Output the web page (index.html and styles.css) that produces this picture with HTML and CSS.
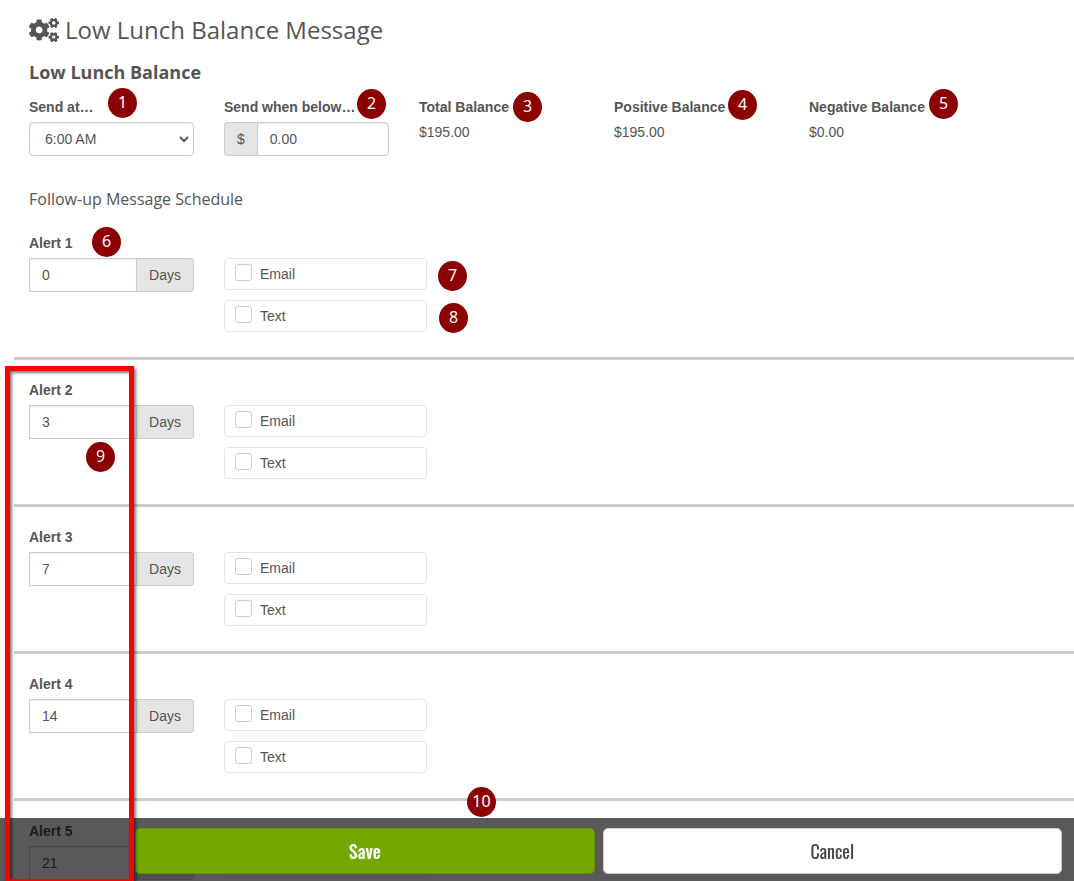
FILE: index.html
```html
<!DOCTYPE html>
<html lang="en">
<head>
<meta charset="utf-8">
<title>Low Lunch Balance Message</title>
<link rel="stylesheet" href="styles.css">
</head>
<body>
<main class="page">
  <header class="intro">
    <h1 class="title">
      <svg class="title-icon" viewBox="0 0 640 512" fill="currentColor" aria-hidden="true">
        <path id="small-gear" d="M512.1 191l-8.2 14.3c-3 5.3-9.4 7.5-15.1 5.4-11.8-4.4-22.6-10.7-32.1-18.6-4.6-3.8-5.8-10.5-2.8-15.7l8.2-14.3c-6.9-8-12.3-17.3-15.9-27.4h-16.5c-6 0-11.2-4.3-12.2-10.3-2-12-2.1-24.6 0-37.1 1-6 6.2-10.4 12.2-10.4h16.5c3.6-10.1 9-19.4 15.9-27.4l-8.2-14.3c-3-5.2-1.900-11.9 2.8-15.7 9.5-7.9 20.4-14.2 32.1-18.6 5.7-2.1 12.1.1 15.1 5.4l8.2 14.3c10.5-1.9 21.2-1.9 31.7 0l8.2-14.3c3-5.300 9.400-7.500 15.100-5.400 11.800 4.400 22.600 10.700 32.100 18.600 4.600 3.800 5.800 10.500 2.800 15.700l-8.200 14.300c6.900 8 12.300 17.300 15.900 27.400h16.500c6 0 11.200 4.300 12.200 10.300 2 12 2.100 24.600 0 37.100-1 6-6.200 10.400-12.200 10.400h-16.500c-3.600 10.100-9 19.400-15.900 27.400l8.200 14.300c3 5.200 1.900 11.900-2.800 15.700-9.500 7.900-20.400 14.200-32.100 18.600-5.700 2.100-12.100-.1-15.100-5.400l-8.200-14.300c-10.400 1.900-21.200 1.900-31.700 0zm-10.500-58.800c38.500 29.600 82.400-14.300 52.800-52.800-38.500-29.700-82.400 14.300-52.800 52.800z"/>
        <use href="#small-gear" y="302"/>
        <path d="M386.3 286.1l33.7 16.8c10.1 5.8 14.5 18.1 10.5 29.1-8.9 24.2-26.4 46.4-42.6 65.8-7.4 8.9-20.2 11.1-30.3 5.3l-29.1-16.800c-16 13.700-34.600 24.600-54.900 31.700v33.600c0 11.600-8.300 21.600-19.700 23.600-24.600 4.200-50.400 4.400-75.900 0-11.500-2-20-11.900-20-23.600V418c-20.300-7.200-38.900-18-54.900-31.700L74 403c-10 5.800-22.900 3.600-30.300-5.300-16.200-19.400-33.300-41.600-42.200-65.700-4-10.900.4-23.200 10.500-29.100l33.300-16.800c-3.900-20.900-3.900-42.400 0-63.400L12 205.800c-10.100-5.800-14.600-18.100-10.500-29 8.900-24.200 26-46.400 42.200-65.800 7.400-8.900 20.200-11.100 30.300-5.300l29.100 16.800c16-13.700 34.600-24.600 54.900-31.700V57.100c0-11.500 8.200-21.500 19.600-23.500 24.600-4.200 50.500-4.400 76-.1 11.500 2 20 11.900 20 23.600v33.600c20.300 7.200 38.900 18 54.900 31.700l29.100-16.800c10-5.800 22.900-3.600 30.300 5.300 16.200 19.400 33.200 41.600 42.100 65.800 4 10.900.1 23.200-10 29.100l-33.700 16.800c3.900 21 3.900 42.500 0 63.500zm-117.600 21.100c59.200-77-28.700-164.900-105.700-105.700-59.200 77 28.700 164.900 105.700 105.700z"/>
      </svg>
      <span>Low Lunch Balance Message</span>
    </h1>
    <h2 class="subtitle">Low Lunch Balance</h2>
    <div class="fields">
      <div class="field">
        <label class="label" for="send-at">Send at…</label>
        <div class="select-box">
          <select class="select" id="send-at"><option>6:00 AM</option></select>
          <svg class="chevron" viewBox="0 0 10 8" aria-hidden="true"><path d="M1 2l4 4 4-4" fill="none" stroke="currentColor" stroke-width="2"/></svg>
        </div>
      </div>
      <div class="field">
        <label class="label" for="below">Send when below…</label>
        <div class="group"><span class="addon addon-start">$</span><input class="input input-end" id="below" type="text" value="0.00"></div>
      </div>
      <div class="field"><span class="label">Total Balance</span><span>$195.00</span></div>
      <div class="field"><span class="label">Positive Balance</span><span>$195.00</span></div>
      <div class="field"><span class="label">Negative Balance</span><span>$0.00</span></div>
    </div>
    <h3 class="schedule">Follow-up Message Schedule</h3>
  </header>

  <section class="alert">
    <label class="label" for="days1">Alert 1</label>
    <div class="alert-row">
      <div class="group"><input class="input" id="days1" type="text" value="0"><span class="addon addon-end">Days</span></div>
      <div class="checks">
        <label class="check"><input class="box" type="checkbox"><span>Email</span></label>
        <label class="check"><input class="box" type="checkbox"><span>Text</span></label>
      </div>
    </div>
  </section>
  <section class="alert">
    <label class="label" for="days2">Alert 2</label>
    <div class="alert-row">
      <div class="group"><input class="input" id="days2" type="text" value="3"><span class="addon addon-end">Days</span></div>
      <div class="checks">
        <label class="check"><input class="box" type="checkbox"><span>Email</span></label>
        <label class="check"><input class="box" type="checkbox"><span>Text</span></label>
      </div>
    </div>
  </section>
  <section class="alert">
    <label class="label" for="days3">Alert 3</label>
    <div class="alert-row">
      <div class="group"><input class="input" id="days3" type="text" value="7"><span class="addon addon-end">Days</span></div>
      <div class="checks">
        <label class="check"><input class="box" type="checkbox"><span>Email</span></label>
        <label class="check"><input class="box" type="checkbox"><span>Text</span></label>
      </div>
    </div>
  </section>
  <section class="alert">
    <label class="label" for="days4">Alert 4</label>
    <div class="alert-row">
      <div class="group"><input class="input" id="days4" type="text" value="14"><span class="addon addon-end">Days</span></div>
      <div class="checks">
        <label class="check"><input class="box" type="checkbox"><span>Email</span></label>
        <label class="check"><input class="box" type="checkbox"><span>Text</span></label>
      </div>
    </div>
  </section>
  <section class="alert">
    <label class="label" for="days5">Alert 5</label>
    <div class="alert-row">
      <div class="group"><input class="input" id="days5" type="text" value="21"><span class="addon addon-end">Days</span></div>
      <div class="checks">
        <label class="check"><input class="box" type="checkbox" aria-label="Email"></label>
      </div>
    </div>
  </section>
</main>

<footer class="actions">
  <button class="button button-save" type="button">Save</button>
  <button class="button button-cancel" type="button">Cancel</button>
</footer>

<div class="highlight"></div>
<span class="pin pin-1">1</span>
<span class="pin pin-2">2</span>
<span class="pin pin-3">3</span>
<span class="pin pin-4">4</span>
<span class="pin pin-5">5</span>
<span class="pin pin-6">6</span>
<span class="pin pin-7">7</span>
<span class="pin pin-8">8</span>
<span class="pin pin-9">9</span>
<span class="pin pin-10">10</span>
</body>
</html>
```
FILE: styles.css
```css
* { box-sizing: border-box; }

body {
  position: relative;
  height: 100vh;
  margin: 0;
  overflow: hidden;
  background: #fff;
  color: #555;
  font: 14px/20px "Liberation Sans", Arial, sans-serif;
}

.page { padding: 12px 0 0 14px; }
.intro { padding-left: 15px; }

.title, .subtitle, .schedule {
  margin: 0;
  font-family: "Open Sans", sans-serif;
}
.title {
  display: flex;
  align-items: center;
  gap: 6px;
  font-size: 24px;
  font-weight: 400;
  line-height: 36px;
}
.title-icon { width: 30px; height: 24px; }
.subtitle {
  padding-top: 12px;
  font-size: 18px;
  font-weight: 700;
  line-height: 24px;
}
.schedule {
  padding: 31px 0 2px;
  font-size: 16px;
  font-weight: 400;
  line-height: 24px;
}

.fields {
  display: flex;
  flex-wrap: wrap;
  gap: 30px;
  padding-top: 13px;
}
.field { width: 165px; white-space: nowrap; }
.label {
  display: block;
  margin-bottom: 5px;
  font-weight: 700;
}

.group { display: flex; width: 165px; height: 34px; }
.input, .select {
  min-width: 0;
  width: 100%;
  height: 34px;
  margin: 0;
  padding: 6px 12px;
  border: 1px solid #ccc;
  border-radius: 0;
  background: #fff;
  box-shadow: inset 0 1px 1px rgba(0, 0, 0, 0.08);
  color: #555;
  font: inherit;
}
.input { flex: 1; }
.input-end { border-radius: 0 4px 4px 0; }
.select {
  padding-left: 15px;
  border-radius: 4px;
  appearance: none;
}
.select-box { display: grid; align-items: center; }
.select-box > * { grid-area: 1 / 1; }
.chevron {
  justify-self: end;
  width: 10px;
  height: 8px;
  margin-right: 5px;
  pointer-events: none;
}
.addon {
  padding: 6px 12px;
  border: 1px solid #ccc;
  background: #e5e5e5;
}
.addon-start { border-right: 0; border-radius: 4px 0 0 4px; }
.addon-end { border-left: 0; border-radius: 0 4px 4px 0; }

.alert {
  padding: 20px 0 25px 15px;
  border-bottom: 3px solid #ccc;
}
.alert-row { display: flex; gap: 30px; }
.checks { display: grid; gap: 10px; width: 203px; }
.check {
  display: flex;
  align-items: center;
  gap: 8px;
  height: 32px;
  padding: 0 10px;
  border: 1px solid #e5e5e5;
  border-radius: 4px;
}
.box {
  width: 17px;
  height: 17px;
  margin: 0 0 3px;
  border: 1px solid #ccc;
  border-radius: 3px;
  background: #fff;
  appearance: none;
}

.actions {
  position: fixed;
  right: 0;
  bottom: 0;
  left: 0;
  display: grid;
  grid-template-columns: 1fr 1fr;
  gap: 8px;
  padding: 10px 12px 7px 135px;
  background: rgba(0, 0, 0, 0.65);
}
.button {
  height: 46px;
  border: 1px solid #ccc;
  border-radius: 5px;
  background: #fff;
  color: #444;
  font: 18px/28px Oswald, "Liberation Sans Narrow", "Liberation Sans", sans-serif;
}
.button-save {
  border-color: #659300;
  background: #73a800;
  color: #fff;
  font-weight: 500;
}

/* Numbered callouts on top of the form */
.highlight {
  position: absolute;
  top: 366px;
  left: 5px;
  width: 129px;
  height: 518px;
  border: 5px solid #f00;
  box-shadow: 2px 2px 3px rgba(0, 0, 0, 0.5), inset 2px 2px 3px rgba(0, 0, 0, 0.5);
}
.pin {
  position: absolute;
  width: 29px;
  height: 30px;
  border-radius: 50%;
  background: #8b0000;
  color: #fff;
  font: 16px/28px "Noto Sans", sans-serif;
  text-align: center;
}
.pin-1 { top: 88px; left: 108px; }
.pin-2 { top: 89px; left: 357px; }
.pin-3 { top: 92px; left: 513px; }
.pin-4 { top: 90px; left: 728px; }
.pin-5 { top: 89px; left: 929px; }
.pin-6 { top: 227px; left: 92px; }
.pin-7 { top: 261px; left: 438px; }
.pin-8 { top: 303px; left: 439px; }
.pin-9 { top: 442px; left: 86px; }
.pin-10 { top: 787px; left: 467px; }
```
